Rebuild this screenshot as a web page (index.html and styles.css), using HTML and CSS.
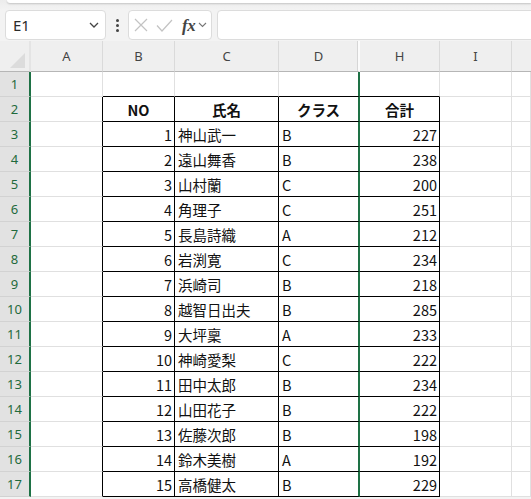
FILE: index.html
```html
<!DOCTYPE html>
<html lang="ja">
<head>
<meta charset="utf-8">
<title>Sheet</title>
<link rel="stylesheet" href="styles.css">
</head>
<body>
<div class="app">
  <div class="ribbon"><div class="ribbon-card"></div></div>
  <div class="fbar">
    <div class="namebox"><span class="ref">E1</span>
      <svg class="chev" width="10" height="6" viewBox="0 0 10 6"><path d="M1 1l4 4 4-4" fill="none" stroke="#444" stroke-width="1.3"/></svg>
    </div>
    <div class="dots"><span></span><span></span><span></span></div>
    <div class="fxbox">
      <svg class="ic" width="14" height="14" viewBox="0 0 14 14"><path d="M1 1l12 12M13 1L1 13" stroke="#c3c3c3" stroke-width="1.2" fill="none"/></svg>
      <svg class="ic" width="17" height="13" viewBox="0 0 17 13"><path d="M1 6.5l5 5.5L16 1" stroke="#c3c3c3" stroke-width="1.2" fill="none"/></svg>
      <span class="fx">fx</span>
      <svg class="chev2" width="9" height="6" viewBox="0 0 9 6"><path d="M1 1l3.5 3.5L8 1" fill="none" stroke="#777" stroke-width="1.1"/></svg>
    </div>
    <div class="finput"></div>
  </div>
  <div class="sheet">
    <div class="ch corner"><span class="tri"></span></div>
    <div class="ch">A</div><div class="ch">B</div><div class="ch">C</div><div class="ch hidden-after">D</div><div class="ch">H</div><div class="ch">I</div><div class="ch last"></div>

    <div class="rh">1</div><div class="c"></div><div class="c tt"></div><div class="c tt"></div><div class="c tt d"></div><div class="c tt"></div><div class="c"></div><div class="c"></div>

    <div class="rh">2</div><div class="c tl"></div><div class="c t hd">NO</div><div class="c t hd">氏名</div><div class="c t d hd">クラス</div><div class="c t hd">合計</div><div class="c"></div><div class="c"></div>

    <div class="rh">3</div><div class="c tl"></div><div class="c t num">1</div><div class="c t">神山武一</div><div class="c t d">B</div><div class="c t num">227</div><div class="c"></div><div class="c"></div>
    <div class="rh">4</div><div class="c tl"></div><div class="c t num">2</div><div class="c t">遠山舞香</div><div class="c t d">B</div><div class="c t num">238</div><div class="c"></div><div class="c"></div>
    <div class="rh">5</div><div class="c tl"></div><div class="c t num">3</div><div class="c t">山村蘭</div><div class="c t d">C</div><div class="c t num">200</div><div class="c"></div><div class="c"></div>
    <div class="rh">6</div><div class="c tl"></div><div class="c t num">4</div><div class="c t">角理子</div><div class="c t d">C</div><div class="c t num">251</div><div class="c"></div><div class="c"></div>
    <div class="rh">7</div><div class="c tl"></div><div class="c t num">5</div><div class="c t">長島詩織</div><div class="c t d">A</div><div class="c t num">212</div><div class="c"></div><div class="c"></div>
    <div class="rh">8</div><div class="c tl"></div><div class="c t num">6</div><div class="c t">岩渕寛</div><div class="c t d">C</div><div class="c t num">234</div><div class="c"></div><div class="c"></div>
    <div class="rh">9</div><div class="c tl"></div><div class="c t num">7</div><div class="c t">浜崎司</div><div class="c t d">B</div><div class="c t num">218</div><div class="c"></div><div class="c"></div>
    <div class="rh">10</div><div class="c tl"></div><div class="c t num">8</div><div class="c t">越智日出夫</div><div class="c t d">B</div><div class="c t num">285</div><div class="c"></div><div class="c"></div>
    <div class="rh">11</div><div class="c tl"></div><div class="c t num">9</div><div class="c t">大坪稟</div><div class="c t d">A</div><div class="c t num">233</div><div class="c"></div><div class="c"></div>
    <div class="rh">12</div><div class="c tl"></div><div class="c t num">10</div><div class="c t">神崎愛梨</div><div class="c t d">C</div><div class="c t num">222</div><div class="c"></div><div class="c"></div>
    <div class="rh">13</div><div class="c tl"></div><div class="c t num">11</div><div class="c t">田中太郎</div><div class="c t d">B</div><div class="c t num">234</div><div class="c"></div><div class="c"></div>
    <div class="rh">14</div><div class="c tl"></div><div class="c t num">12</div><div class="c t">山田花子</div><div class="c t d">B</div><div class="c t num">222</div><div class="c"></div><div class="c"></div>
    <div class="rh">15</div><div class="c tl"></div><div class="c t num">13</div><div class="c t">佐藤次郎</div><div class="c t d">B</div><div class="c t num">198</div><div class="c"></div><div class="c"></div>
    <div class="rh">16</div><div class="c tl"></div><div class="c t num">14</div><div class="c t">鈴木美樹</div><div class="c t d">A</div><div class="c t num">192</div><div class="c"></div><div class="c"></div>
    <div class="rh">17</div><div class="c tl"></div><div class="c t num">15</div><div class="c t">高橋健太</div><div class="c t d">B</div><div class="c t num">229</div><div class="c"></div><div class="c"></div>
  </div>
</div>
</body>
</html>
```

FILE: styles.css
```css
* { box-sizing: border-box; }
html, body { margin: 0; padding: 0; }
body {
  background: #f3f3f3;
  font-family: "Noto Sans", "Liberation Sans", sans-serif;
  width: 531px;
  height: 499px;
  overflow: hidden;
}
.app { width: 531px; overflow: hidden; }

.ribbon { height: 10px; padding-left: 7px; background: linear-gradient(#ececec, #f3f3f3); }
.ribbon-card {
  height: 3px;
  background: #fff;
  border-radius: 0 0 0 5px;
  box-shadow: 0 1px 2px rgba(0,0,0,0.18);
}

.fbar {
  display: flex;
  align-items: center;
  height: 31px;
  padding: 0 0 1px 5px;
  margin-right: -10px;
}
.namebox, .fxbox, .finput {
  height: 30px;
  background: #fff;
  border: 1px solid #dcdcdc;
  border-radius: 4px;
}
.namebox {
  width: 101px;
  display: flex;
  align-items: center;
  justify-content: space-between;
  padding: 0 6px 0 7px;
}
.ref { font-size: 15px; color: #2b2b2b; }
.chev { display: block; }
.dots {
  width: 22px;
  display: flex;
  flex-direction: column;
  align-items: center;
  gap: 2px;
}
.dots span { width: 3px; height: 3px; background: #444; border-radius: 50%; }
.fxbox {
  width: 84px;
  display: flex;
  align-items: center;
  padding-left: 5px;
  gap: 0;
}
.fxbox .ic { display: block; }
.fxbox .ic:first-child { margin-right: 8px; }
.fx {
  font-family: "Liberation Serif", "DejaVu Serif", serif;
  font-style: italic;
  font-weight: bold;
  font-size: 17px;
  color: #444;
  margin-left: 9px;
  line-height: 1;
  letter-spacing: -0.5px;
}
.chev2 { display: block; margin-left: 3px; }
.finput { flex: 1; margin-left: 5px; }

.sheet {
  display: grid;
  grid-template-columns: 31px 72px 72px 104px 81px 80px 72px 1fr;
  grid-template-rows: 31px repeat(17, 25px);
  background: #fff;
}
.ch {
  background: #efefef;
  border-bottom: 1px solid #b6b6b6;
  border-right: 1px solid #dadada;
  display: flex;
  align-items: center;
  justify-content: center;
  font-size: 13px;
  color: #444;
}
.ch.corner { position: relative; border-right: 2px solid #e4e4e4; }
.tri {
  position: absolute;
  right: 4px;
  bottom: 3px;
  width: 0; height: 0;
  border-left: 15px solid transparent;
  border-bottom: 15px solid #dcdcdc;
}
.ch.hidden-after { border-right: 2px solid #fbfbfb; box-shadow: inset -1px 0 0 #d6d6d6; }
.ch.last { border-right: none; }

.rh {
  background: #e2e2e2;
  border-right: 2px solid #1e7145;
  border-bottom: 1px solid #d2d2d2;
  display: flex;
  align-items: center;
  justify-content: center;
  font-size: 13px;
  color: #1f6a3c;
}

.c {
  border-right: 1px solid #e0e0e0;
  border-bottom: 1px solid #e0e0e0;
  display: flex;
  align-items: center;
  padding: 0 3px;
  font-family: "Noto Sans CJK JP", "Noto Sans", sans-serif;
  font-size: 14.5px;
  color: #111;
  white-space: nowrap;
}
.c.tt { border-bottom-color: #000; }
.c.tl { border-right-color: #000; }
.c.t { border-right-color: #000; border-bottom-color: #000; }
.c.d { border-right: 2px solid #1e7145; }
.c.num { justify-content: flex-end; padding-right: 2px; }
.c.hd { justify-content: center; font-weight: bold; }
```
